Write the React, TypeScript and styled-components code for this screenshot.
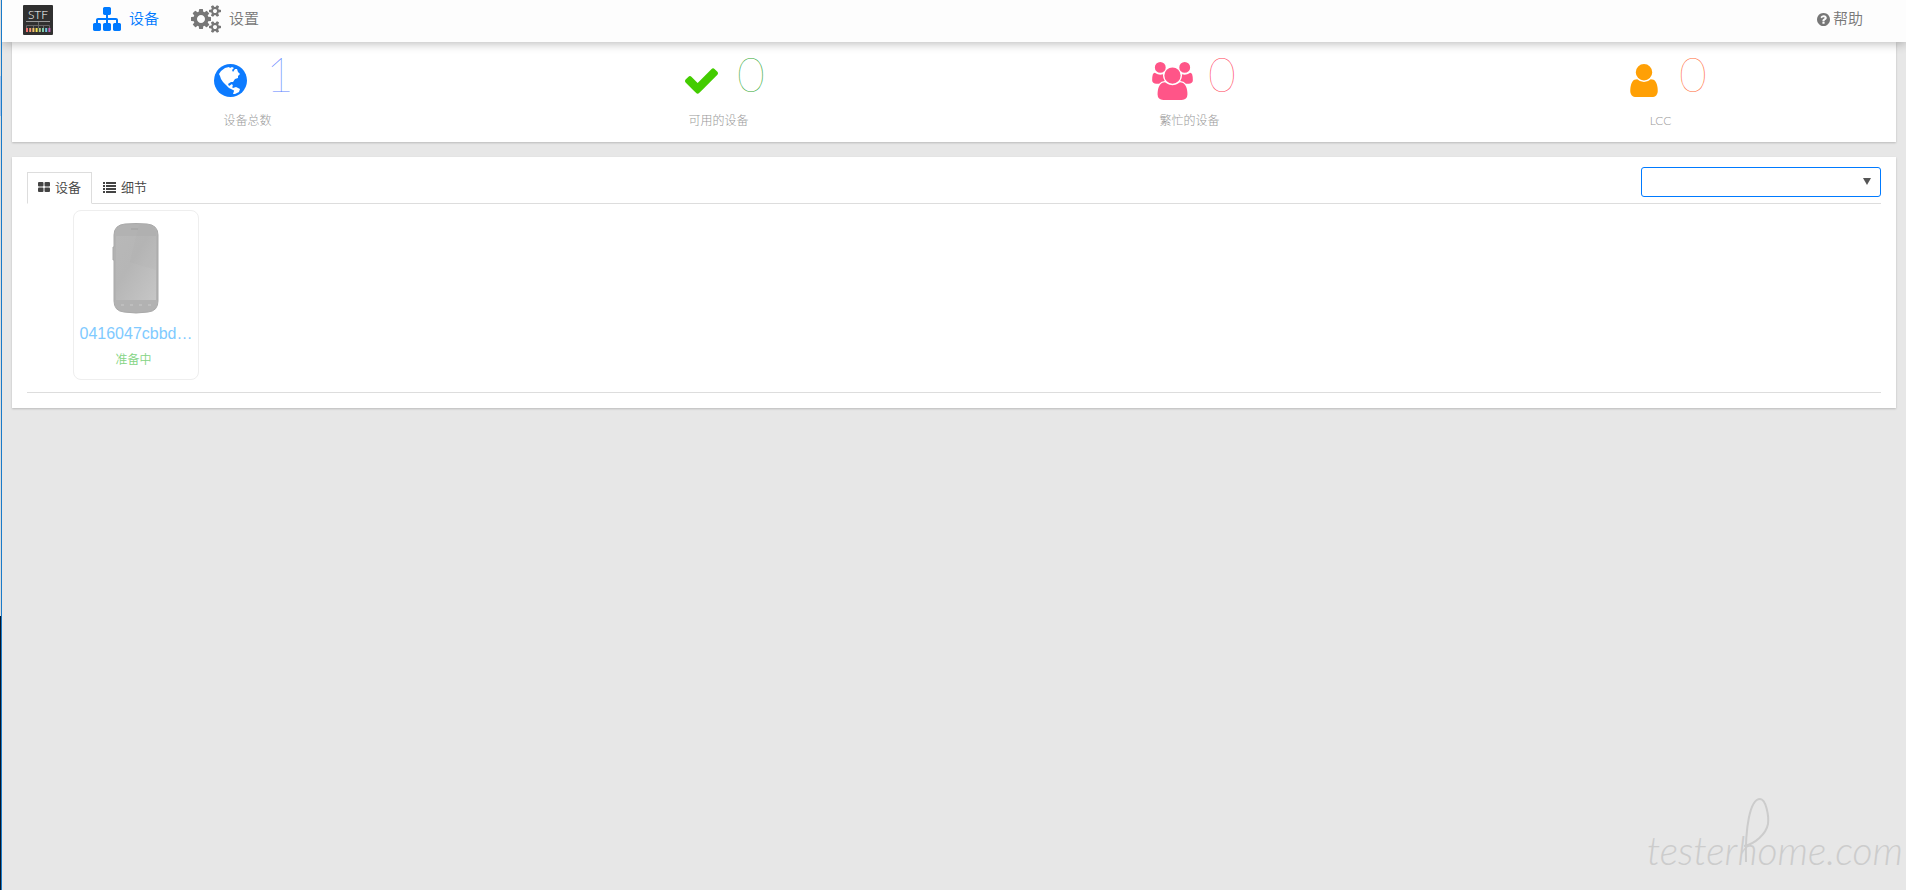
import React from 'react';
import styled, { createGlobalStyle } from 'styled-components';

const Global = createGlobalStyle`
  * { box-sizing: border-box; }
  body { margin: 0; background: #e7e7e7; font-family: Lato, "Noto Sans CJK SC", sans-serif; font-size: 13px; font-weight: 350; color: #444; }
  svg { display: block; flex: none; }
`;

const cogsPath = 'M960 896q0-106-75-181t-181-75-181 75-75 181 75 181 181 75 181-75 75-181zm768 512q0-52-38-90t-90-38-90 38-38 90q0 53 37.5 90.5t90.5 37.5 90.5-37.5 37.5-90.5zm0-1024q0-52-38-90t-90-38-90 38-38 90q0 53 37.5 90.5t90.5 37.5 90.5-37.5 37.5-90.5zm-384 421v185q0 10-7 19.5t-16 10.5l-155 24q-11 35-32 76 34 48 90 115 7 11 7 20 0 12-7 19-23 30-82.5 89.5t-78.5 59.5q-11 0-21-7l-115-90q-37 19-77 31-11 108-23 155-7 24-30 24h-186q-11 0-20-7.5t-10-17.5l-23-153q-34-10-75-31l-118 89q-7 7-20 7-11 0-21-8-144-133-144-160 0-9 7-19 10-14 41-53t47-61q-23-44-35-82l-152-24q-10-1-17-9.5t-7-19.5v-185q0-10 7-19.5t16-10.5l155-24q11-35 32-76-34-48-90-115-7-11-7-20 0-12 7-20 22-30 82-89t79-59q11 0 21 7l115 90q34-18 77-32 11-108 23-154 7-24 30-24h186q11 0 20 7.5t10 17.5l23 153q34 10 75 31l118-89q8-7 20-7 11 0 21 8 144 133 144 160 0 8-7 19-12 16-42 54t-45 60q23 48 34 82l152 23q10 2 17 10.5t7 19.5zm640 533v140q0 16-149 31-12 27-30 52 51 113 51 138 0 4-4 7-122 71-124 71-8 0-46-47t-52-68q-20 2-30 2t-30-2q-14 21-52 68t-46 47q-2 0-124-71-4-3-4-7 0-25 51-138-18-25-30-52-149-15-149-31v-140q0-16 149-31 13-29 30-52-51-113-51-138 0-4 4-7 4-2 35-20t59-34 30-16q8 0 46 46.5t52 67.5q20-2 30-2t30 2q51-71 92-112l6-2q4 0 124 70 4 3 4 7 0 25-51 138 17 23 30 52 149 15 149 31zm0-1024v140q0 16-149 31-12 27-30 52 51 113 51 138 0 4-4 7-122 71-124 71-8 0-46-47t-52-68q-20 2-30 2t-30-2q-14 21-52 68t-46 47q-2 0-124-71-4-3-4-7 0-25 51-138-18-25-30-52-149-15-149-31v-140q0-16 149-31 13-29 30-52-51-113-51-138 0-4 4-7 4-2 35-20t59-34 30-16q8 0 46 46.5t52 67.5q20-2 30-2t30 2q51-71 92-112l6-2q4 0 124 70 4 3 4 7 0 25-51 138 17 23 30 52 149 15 149 31z';
const sitemapPath = 'M1792 1248v320q0 40-28 68t-68 28h-320q-40 0-68-28t-28-68v-320q0-40 28-68t68-28h96v-192h-512v192h96q40 0 68 28t28 68v320q0 40-28 68t-68 28h-320q-40 0-68-28t-28-68v-320q0-40 28-68t68-28h96v-192h-512v192h96q40 0 68 28t28 68v320q0 40-28 68t-68 28h-320q-40 0-68-28t-28-68v-320q0-40 28-68t68-28h96v-192q0-52 38-90t90-38h512v-192h-96q-40 0-68-28t-28-68v-320q0-40 28-68t68-28h320q40 0 68 28t28 68v320q0 40-28 68t-68 28h-96v192h512q52 0 90 38t38 90v192h96q40 0 68 28t28 68z';
const helpPath = 'M1024 1376v-192q0-14-9-23t-23-9h-192q-14 0-23 9t-9 23v192q0 14 9 23t23 9h192q14 0 23-9t9-23zm256-672q0-88-55.5-163t-138.5-116-170-41q-243 0-371 213-15 24 8 42l132 100q7 6 19 6 16 0 25-12 53-68 86-92 34-24 86-24 48 0 85.5 26t37.5 59q0 38-20 61t-68 45q-63 28-115.5 86.5t-52.5 125.5v36q0 14 9 23t23 9h192q14 0 23-9t9-23q0-19 21.5-49.5t54.5-49.5q32-18 49-28.5t46-35 44.5-48 28-60.5 12.5-81zm384 192q0 209-103 385.5t-279.5 279.5-385.5 103-385.5-103-279.5-279.5-103-385.5 103-385.5 279.5-279.5 385.5-103 385.5 103 279.5 279.5 103 385.5z';
const checkPath = 'M1671 566q0 40-28 68l-724 724-136 136q-28 28-68 28t-68-28l-136-136-362-362q-28-28-28-68t28-68l136-136q28-28 68-28t68 28l294 295 656-657q28-28 68-28t68 28l136 136q28 28 28 68z';
const usersPath = 'M657 896q-162 5-265 128h-134q-82 0-138-40.5t-56-118.5q0-353 124-353 6 0 43.5 21t97.5 42.5 119 21.5q67 0 133-23-5 37-5 66 0 139 81 256zm1071 637q0 120-73 189.5t-194 69.5h-874q-121 0-194-69.5t-73-189.5q0-53 3.5-103.5t14-109 26.5-108.5 43-97.5 62-81 85.5-53.5 111.5-20q10 0 43 21.5t73 48 107 48 135 21.5 135-21.5 107-48 73-48 43-21.5q61 0 111.5 20t85.5 53.5 62 81 43 97.5 26.5 108.5 14 109 3.5 103.5zm-1024-1277q0 106-75 181t-181 75-181-75-75-181 75-181 181-75 181 75 75 181zm704 384q0 159-112.5 271.5t-271.5 112.5-271.5-112.5-112.5-271.5 112.5-271.5 271.5-112.5 271.5 112.5 112.5 271.5zm576 225q0 78-56 118.5t-138 40.5h-134q-103-123-265-128 81-117 81-256 0-29-5-66 66 23 133 23 59 0 119-21.5t97.5-42.5 43.5-21q124 0 124 353zm-128-609q0 106-75 181t-181 75-181-75-75-181 75-181 181-75 181 75 75 181z';
const userPath = 'M1536 1399q0 109-62.5 187t-150.5 78h-854q-88 0-150.5-78t-62.5-187q0-85 8.5-160.5t31.5-152 58.5-131 94-89 134.5-34.5q131 128 313 128t313-128q76 0 134.5 34.5t94 89 58.5 131 31.5 152 8.5 160.5zm-256-887q0 159-112.5 271.5t-271.5 112.5-271.5-112.5-112.5-271.5 112.5-271.5 271.5-112.5 271.5 112.5 112.5 271.5z';

const Glyph = ({ d, w, h, box }: { d: string; w: number; h: number; box: string }) => (
  <svg width={w} height={h} viewBox={box} fill="currentColor" aria-hidden="true"><path d={d} /></svg>
);

const Globe = () => (
  <svg width="33" height="33" viewBox="0 0 33 33" aria-hidden="true">
    <circle cx="16.5" cy="16.5" r="16.5" fill="currentColor" />
    <path fill="#fff" d="M5 10L7 7 11 4 15 3 16 4 18 3 20 4 18 6 19 8 21 5 23 5 24 8 26 10 24 12 24 14 21 15 19 18 17 18 14 20 15 22 18 20 19 22 18 23 20 25 22 27 19 26 15 24 12 21 9 18 7 15 6 12ZM19 24L22 23 26 25 25 28 21 30 19 30 20 27Z" />
  </svg>
);

const chips = ['#f07070', '#f09870', '#f4c070', '#f0e050', '#a8cc90', '#80c8a8', '#70c0e0', '#c060b8'];

const Logo = () => (
  <svg width="30" height="30" viewBox="0 0 30 30" role="img" aria-label="STF">
    <rect width="30" height="30" rx="1" fill="#303030" />
    <text x="15" y="14" textAnchor="middle" fontFamily="Lato, sans-serif" fontSize="12" fill="#fff">STF</text>
    <path d="M3 16.5h24" stroke="#999" />
    <path d="M15.5 17v3M3.5 23v-2.500h23v2.500M10.500 20v3M15.500 20v3M20.500 20v3" fill="none" stroke="#666" />
    {chips.map((c, i) => (
      <rect key={c} x={3 + i * 3.2} y="23" width="2" height="4" fill={c} />
    ))}
  </svg>
);

const GridIcon = () => (
  <svg width="12" height="12" viewBox="0 0 12 12" fill="currentColor" aria-hidden="true">
    <rect y="1" width="5.500" height="4.500" rx="1" /><rect x="6.500" y="1" width="5.500" height="4.500" rx="1" />
    <rect y="6.500" width="5.500" height="4.500" rx="1" /><rect x="6.500" y="6.500" width="5.500" height="4.500" rx="1" />
  </svg>
);

const ListIcon = () => (
  <svg width="13" height="12" viewBox="0 0 13 12" fill="currentColor" aria-hidden="true">
    {[1, 4, 7, 10].map((y) => (
      <g key={y}><rect y={y} width="2" height="2" /><rect x="3" y={y} width="10" height="2" /></g>
    ))}
  </svg>
);

const Phone = () => (
  <svg width="48" height="92" viewBox="0 0 48 92" role="img" aria-label="设备">
    <defs>
      <linearGradient id="screen" x1="0" y1="0" x2="1" y2="1">
        <stop offset="0" stopColor="#b8b8b8" /><stop offset=".4" stopColor="#b6b6b6" /><stop offset="1" stopColor="#c6c6c6" />
      </linearGradient>
    </defs>
    <path d="M2 13Q2 3 13 2Q24 1 35 2Q46 3 46 13V79Q46 89 36 90Q24 92 12 90Q2 89 2 79V38H1V25H2Z" fill="#b2b2b2" stroke="#a9a9a9" />
    <path d="M4 14h40v64H4z" fill="url(#screen)" />
    <path d="M27 3h9q8 1 8 11v34L18 40z" fill="#999" opacity=".06" />
    <path d="M19 7h7" stroke="#a0a0a0" />
    <path d="M9 83h3M18 83h3M27 83h3M36 83h3" stroke="#bebebe" strokeWidth="2" />
  </svg>
);

const Page = styled.div`
  position: relative;
  min-height: 100vh;
  padding-left: 2px;
`;
const Edge = styled.div`
  position: absolute;
  inset: 0 auto 0 0;
  width: 2px;
  border-right: 1px solid #1a7bc9;
  background: linear-gradient(#dcdcdc 0 76px, #a9c3e6 76px 116px, #dcdcdc 116px 616px, #0a1526 616px);
`;
const TopBar = styled.header`
  position: relative;
  display: flex;
  align-items: center;
  height: 42px;
  padding: 0 43px 4px 21px;
  background: #fdfdfd;
  box-shadow: 0 1px 10px rgba(0, 0, 0, 0.3);
`;
const Brand = styled.a`
  margin-right: 40px;
  padding-top: 2px;
`;
const NavLink = styled.a<{ $active?: boolean; $gap?: number }>`
  display: flex;
  align-items: center;
  gap: ${(p) => p.$gap ?? 8}px;
  margin-right: 32px;
  color: ${(p) => (p.$active ? '#007aff' : '#777')};
  font-size: 15px;
  line-height: 20px;
  text-decoration: none;
  &:last-child { margin: 0 0 0 auto; }
`;
const NavLabel = styled.span`
  padding-bottom: 2px;
`;
const Main = styled.main`
  padding: 0 10px;
`;
const Panel = styled.section`
  background: #fff;
  box-shadow: 0 1px 2px rgba(0, 0, 0, 0.2);
`;
const Stats = styled(Panel)`
  display: grid;
  grid-template-columns: repeat(4, 1fr);
  height: 100px;
`;
const Stat = styled.div`
  display: flex;
  flex-direction: column;
  align-items: center;
  padding-top: 11px;
`;
const Figure = styled.div<{ $color: string }>`
  display: flex;
  align-items: center;
  gap: 15px;
  height: 54px;
  padding-left: 9px;
  color: ${(p) => p.$color};
`;
const IconSlot = styled.span`
  display: flex;
  justify-content: center;
  width: 41px;
  padding-top: 1px;
`;
const Count = styled.span<{ $color: string }>`
  width: 28px;
  height: 54px;
  color: ${(p) => p.$color};
  font: 100 48px/42px Lato, sans-serif;
`;
const Caption = styled.span`
  color: #999;
  font-size: 12px;
  line-height: 18px;
  font-weight: 300;
  margin-top: 5px;
`;
const Devices = styled(Panel)`
  margin-top: 15px;
  padding: 10px 15px 15px;
`;
const TabBar = styled.div`
  display: flex;
  align-items: flex-end;
  height: 37px;
  border-bottom: 1px solid #ddd;
`;
const Tab = styled.button<{ $active?: boolean }>`
  display: flex;
  align-items: center;
  gap: 5px;
  height: 32px;
  margin-bottom: -1px;
  padding: 0 10px 2px;
  border: 1px solid ${(p) => (p.$active ? '#ddd' : 'transparent')};
  border-bottom-color: ${(p) => (p.$active ? '#fff' : 'transparent')};
  background: ${(p) => (p.$active ? '#fff' : 'transparent')};
  color: #444;
  font: 350 13px/18px Lato, "Noto Sans CJK SC", sans-serif;
`;
const Filter = styled.div`
  position: relative;
  display: flex;
  align-self: flex-start;
  margin-left: auto;
  width: 240px;
  &::after {
    content: "";
    position: absolute;
    right: 10px;
    top: 11px;
    border: 4px solid transparent;
    border-top: 7px solid #555;
    border-bottom: 0;
    pointer-events: none;
  }
`;
const FilterSelect = styled.select`
  appearance: none;
  width: 100%;
  height: 30px;
  border: 1px solid #007aff;
  border-radius: 3px;
  background: #fff;
`;
const DeviceList = styled.ul`
  display: flex;
  margin: 0;
  padding: 6px 46px 12px;
  border-bottom: 1px solid #ddd;
  list-style: none;
`;
const Card = styled.li`
  display: flex;
  flex-direction: column;
  align-items: center;
  width: 126px;
  height: 170px;
  padding: 11px 5px;
  border: 1px solid #eee;
  border-radius: 8px;
`;
const DeviceName = styled.a`
  margin-top: 10px;
  color: #80caff;
  font: 16px/20px "Liberation Sans", sans-serif;
  white-space: nowrap;
  text-decoration: none;
`;
const Status = styled.span`
  margin-top: 7px;
  margin-right: 5px;
  color: #84d484;
  font-size: 12px;
  line-height: 18px;
`;
const Watermark = styled.div`
  position: absolute;
  right: 3px;
  bottom: 18px;
  color: #ccc;
  font: italic 300 39px/44px Lato, sans-serif;
  svg { position: absolute; left: 96px; top: -30px; }
`;

const stats = [
  { label: '设备总数', value: 1, color: '#0d7bff', light: '#5c80ff', icon: <Globe /> },
  { label: '可用的设备', value: 0, color: '#43cc00', light: '#30a830', icon: <Glyph d={checkPath} w={33} h={26} box="121 334 1550 1188" /> },
  { label: '繁忙的设备', value: 0, color: '#ff5588', light: '#ff4058', icon: <Glyph d={usersPath} w={41} h={38} box="64 0 1920 1792" /> },
  { label: 'LCC', value: 0, color: '#ffa005', light: '#ff6a35', icon: <Glyph d={userPath} w={30} h={33} box="256 128 1280 1536" /> },
];

export default function App() {
  return (
    <Page>
      <Global />
      <TopBar>
        <Brand href="#"><Logo /></Brand>
        <NavLink href="#devices" $active><Glyph d={sitemapPath} w={28} h={24} box="0 128 1792 1536" /><NavLabel>设备</NavLabel></NavLink>
        <NavLink href="#settings"><Glyph d={cogsPath} w={30} h={28} box="64 0 1920 1792" /><NavLabel>设置</NavLabel></NavLink>
        <NavLink href="#help" $gap={3}><Glyph d={helpPath} w={13} h={13} box="128 128 1536 1536" /><NavLabel>帮助</NavLabel></NavLink>
      </TopBar>
      <Main>
        <Stats>
          {stats.map((s) => (
            <Stat key={s.label}>
              <Figure $color={s.color}><IconSlot>{s.icon}</IconSlot><Count $color={s.light}>{s.value}</Count></Figure>
              <Caption>{s.label}</Caption>
            </Stat>
          ))}
        </Stats>
        <Devices>
          <TabBar>
            <Tab type="button" $active><GridIcon />设备</Tab>
            <Tab type="button"><ListIcon />细节</Tab>
            <Filter><FilterSelect aria-label="筛选"><option /></FilterSelect></Filter>
          </TabBar>
          <DeviceList>
            <Card>
              <Phone />
              <DeviceName href="#device">0416047cbbd…</DeviceName>
              <Status>准备中</Status>
            </Card>
          </DeviceList>
        </Devices>
      </Main>
      <Watermark>
        testerhome.com
        <svg width="30" height="66" viewBox="0 0 30 66" fill="none" stroke="currentColor" strokeWidth="2" aria-hidden="true">
          <path d="M3 64C2 30 7 1 17 1 23 1 26 18 25 26 23 36 12 46 1 48" />
        </svg>
      </Watermark>
      <Edge />
    </Page>
  );
}
